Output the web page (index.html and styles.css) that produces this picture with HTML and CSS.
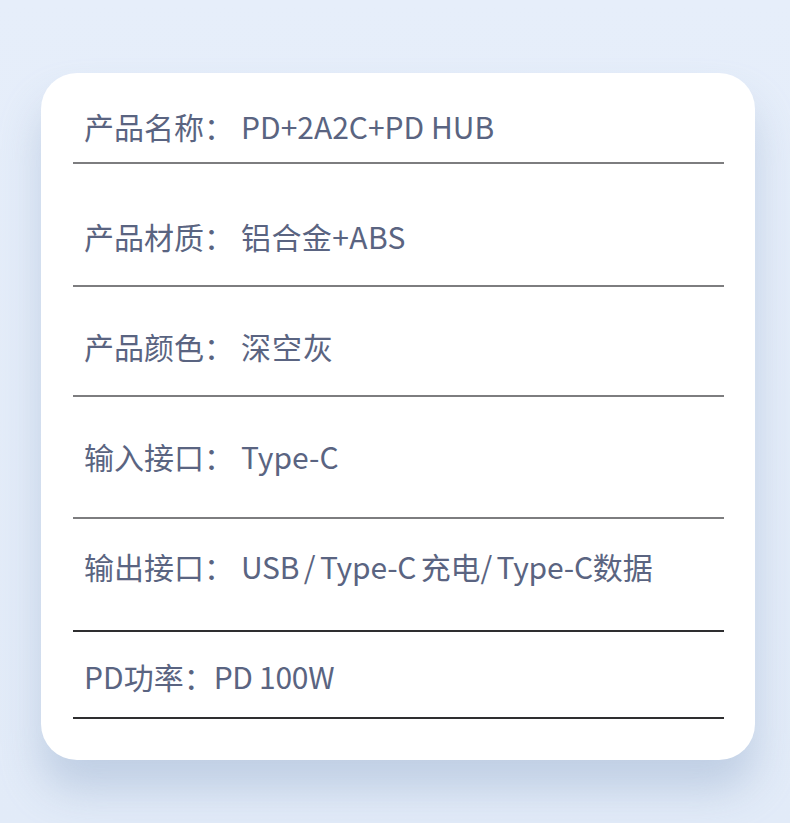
FILE: index.html
```html
<!DOCTYPE html>
<html lang="zh">
<head>
<meta charset="utf-8">
<link rel="stylesheet" href="styles.css">
</head>
<body>
<div class="page">
  <div class="card">
    <div class="row r1"><span class="txt">产品名称：<span class="val">PD+2A2C+PD HUB</span></span></div>
    <div class="row r2"><span class="txt">产品材质：<span class="val mid">铝合金+ABS</span></span></div>
    <div class="row r3"><span class="txt">产品颜色：<span class="val wide">深空灰</span></span></div>
    <div class="row r4"><span class="txt">输入接口：<span class="val">Type-C</span></span></div>
    <div class="row r5 dark"><span class="txt">输出接口：<span class="val tight">USB / Type-C 充电/ Type-C数据</span></span></div>
    <div class="row r6 dark"><span class="txt">PD功率：<span class="val flush">PD 100W</span></span></div>
  </div>
</div>
</body>
</html>
```

FILE: styles.css
```css
html, body {
  margin: 0;
  padding: 0;
}
body {
  width: 790px;
  height: 823px;
  overflow: hidden;
  background: linear-gradient(180deg, #e6eefa 0%, #e2ebf8 100%);
  font-family: "Noto Sans CJK SC", "Noto Sans", sans-serif;
}
.page {
  padding: 73px 35px 0 41px;
}
.card {
  width: 714px;
  height: 687px;
  box-sizing: border-box;
  background: #ffffff;
  border-radius: 36px;
  box-shadow: 0 30px 40px rgba(150, 172, 205, 0.45);
  padding: 33px 31px 0 32px;
  display: flex;
  flex-direction: column;
}
.row {
  border-bottom: 2px solid #7d7d7f;
  display: flex;
  align-items: center;
}
.row.dark {
  border-bottom-color: #2e2e30;
}
.txt {
  display: block;
  padding-left: 11px;
  font-size: 30px;
  line-height: 40px;
  height: 40px;
  color: #5a6481;
  white-space: nowrap;
}
.val {
  margin-left: 7px;
}
.val.wide {
  letter-spacing: 1px;
}
.val.mid {
  letter-spacing: 0.4px;
}
.val.tight {
  letter-spacing: -0.2px;
  word-spacing: -2px;
}
.val.flush {
  margin-left: 0;
  letter-spacing: -0.3px;
}
.r1 { padding: 0 0 16px; }
.r2 { padding: 52px 0 29px; }
.r3 { padding: 39px 0 29px; }
.r4 { padding: 39px 0 41px; }
.r5 { padding: 27px 0 44px; }
.r6 { padding: 24px 0 21px; }
```
